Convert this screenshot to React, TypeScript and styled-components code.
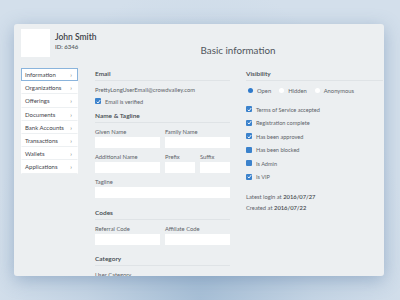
import React from "react";
import styled, { createGlobalStyle } from "styled-components";

const Global = createGlobalStyle`
  html, body { margin: 0; padding: 0; }
  body {
    width: 400px; height: 300px; overflow: hidden;
    background: #d3dfeb;
    font-family: "Source Sans Pro", Lato, "Noto Sans", sans-serif;
  }
`;

const Page = styled.div`
  width: 400px;
  height: 300px;
  padding: 24px 16px 0 14px;
  box-sizing: border-box;
  background: radial-gradient(ellipse at 50% 100%, #a7bfd6 0%, #c4d4e4 40%, #d3dfeb 75%);
`;

const Card = styled.div`
  width: 370px;
  height: 252px;
  background: #eceff1;
  border-radius: 3px;
  box-shadow: 0 4px 18px rgba(90, 125, 165, 0.45);
  overflow: hidden;
  box-sizing: border-box;
  padding: 5px 0 0 7px;
  display: grid;
  grid-template-columns: 57px 1fr;
  column-gap: 17px;
  row-gap: 11px;
  grid-template-rows: 28px auto;
`;

const Head = styled.div`
  display: flex;
  align-items: center;
  gap: 5px;
  grid-column: 1 / 2;
  white-space: nowrap;
`;

const Avatar = styled.div`
  width: 29px;
  height: 28px;
  background: #fff;
  flex: none;
`;

const NameBlock = styled.div`
  display: flex;
  flex-direction: column;
  gap: 1px;
  margin-top: -4px;
`;

const Name = styled.div`
  font-size: 8.5px;
  font-weight: 600;
  color: #3c4248;
`;

const Id = styled.div`
  font-size: 6px;
  font-weight: 600;
  color: #555b61;
`;

const Title = styled.div`
  font-size: 9.8px;
  color: #50565c;
  text-align: center;
  align-self: end;
  padding-bottom: 1px;
  padding-right: 3px;
`;

const Nav = styled.div`
  display: flex;
  flex-direction: column;
  background: #fff;
  align-self: start;
`;

const NavItem = styled.div<{ $active?: boolean }>`
  height: 13.2px;
  box-sizing: border-box;
  display: flex;
  align-items: center;
  justify-content: space-between;
  padding: 0 5px 0 3px;
  font-size: 6px;
  color: #3f454b;
  border: 1px solid ${(p) => (p.$active ? "#8ab4dc" : "transparent")};
  border-bottom: 1px solid ${(p) => (p.$active ? "#8ab4dc" : "#edf0f2")};
  span.ch { font-size: 6px; color: #6a7076; }
`;

const Body = styled.div`
  display: grid;
  grid-template-columns: 135px 137px;
  column-gap: 16px;
  padding-top: 2px;
`;

const Col = styled.div`
  display: flex;
  flex-direction: column;
`;

const SectionTitle = styled.div<{ $mt?: number }>`
  font-size: 6.5px;
  font-weight: 600;
  color: #41474d;
  padding-bottom: 3px;
  border-bottom: 1px solid #dfe3e6;
  margin-top: ${(p) => p.$mt ?? 0}px;
  margin-bottom: 5px;
`;

const Text = styled.div`
  font-size: 5.8px;
  color: #5d6369;
  line-height: 8px;
`;

const Row = styled.div<{ $cols: string; $mb?: number }>`
  display: grid;
  grid-template-columns: ${(p) => p.$cols};
  column-gap: 5px;
  margin-bottom: ${(p) => p.$mb ?? 4}px;
`;

const Field = styled.div`
  display: flex;
  flex-direction: column;
  gap: 2px;
`;

const Label = styled.div`
  font-size: 5.8px;
  color: #5d6369;
  line-height: 7px;
`;

const Input = styled.div`
  height: 11px;
  background: #fff;
`;

const CheckRow = styled.div<{ $mt?: number }>`
  display: flex;
  align-items: center;
  gap: 4px;
  font-size: 5.6px;
  color: #5d6369;
  height: 8px;
  margin-top: ${(p) => p.$mt ?? 0}px;
`;

const Box = styled.div`
  width: 6px;
  height: 6px;
  background: #3b82cc;
  border-radius: 1px;
  display: flex;
  align-items: center;
  justify-content: center;
  flex: none;
`;

const Radios = styled.div`
  display: flex;
  align-items: center;
  gap: 8px;
  margin-top: 1px;
  margin-left: 2px;
`;

const Radio = styled.div`
  display: flex;
  align-items: center;
  gap: 4px;
  font-size: 5.8px;
  color: #5d6369;
`;

const Dot = styled.div<{ $on?: boolean }>`
  width: 5px;
  height: 5px;
  border-radius: 50%;
  background: ${(p) => (p.$on ? "#2f7acb" : "#fff")};
`;

const Meta = styled.div<{ $mt?: number }>`
  font-size: 5.8px;
  color: #5d6369;
  margin-top: ${(p) => p.$mt ?? 0}px;
  line-height: 8px;
  b { font-weight: 600; color: #3f454b; }
`;

const Check = ({ on }: { on: boolean }) => (
  <Box>
    {on && (
      <svg width="5" height="5" viewBox="0 0 10 10">
        <path d="M1.5 5.5 L4 8 L8.5 2" stroke="#fff" strokeWidth="1.8" fill="none" />
      </svg>
    )}
  </Box>
);

const navItems = [
  "Information",
  "Organizations",
  "Offerings",
  "Documents",
  "Bank Accounts",
  "Transactions",
  "Wallets",
  "Applications",
];

const flags: [string, boolean][] = [
  ["Terms of Service accepted", true],
  ["Registration complete", true],
  ["Has been approved", true],
  ["Has been blocked", false],
  ["Is Admin", false],
  ["Is VIP", true],
];

export default function App() {
  return (
    <>
      <Global />
      <Page>
        <Card>
          <Head>
            <Avatar />
            <NameBlock>
              <Name>John Smith</Name>
              <Id>ID: 6346</Id>
            </NameBlock>
          </Head>
          <Title>Basic information</Title>
          <Nav>
            {navItems.map((n, i) => (
              <NavItem key={n} $active={i === 0}>
                <span>{n}</span>
                <span className="ch">›</span>
              </NavItem>
            ))}
          </Nav>
          <Body>
            <Col>
              <SectionTitle>Email</SectionTitle>
              <Text>PrettyLongUserEmail@crowdvalley.com</Text>
              <CheckRow $mt={3}>
                <Check on />
                Email is verified
              </CheckRow>
              <SectionTitle $mt={7}>Name &amp; Tagline</SectionTitle>
              <Row $cols="1fr 1fr" $mb={5}>
                <Field>
                  <Label>Given Name</Label>
                  <Input />
                </Field>
                <Field>
                  <Label>Family Name</Label>
                  <Input />
                </Field>
              </Row>
              <Row $cols="65px 30px 30px" $mb={5}>
                <Field>
                  <Label>Additional Name</Label>
                  <Input />
                </Field>
                <Field>
                  <Label>Prefix</Label>
                  <Input />
                </Field>
                <Field>
                  <Label>Suffix</Label>
                  <Input />
                </Field>
              </Row>
              <Row $cols="1fr" $mb={0}>
                <Field>
                  <Label>Tagline</Label>
                  <Input />
                </Field>
              </Row>
              <SectionTitle $mt={11}>Codes</SectionTitle>
              <Row $cols="1fr 1fr" $mb={0}>
                <Field>
                  <Label>Referral Code</Label>
                  <Input />
                </Field>
                <Field>
                  <Label>Affiliate Code</Label>
                  <Input />
                </Field>
              </Row>
              <SectionTitle $mt={10}>Category</SectionTitle>
              <Label>User Category</Label>
            </Col>
            <Col>
              <SectionTitle>Visibility</SectionTitle>
              <Radios>
                <Radio>
                  <Dot $on />
                  Open
                </Radio>
                <Radio>
                  <Dot />
                  Hidden
                </Radio>
                <Radio>
                  <Dot />
                  Anonymous
                </Radio>
              </Radios>
              {flags.map(([l, on], i) => (
                <CheckRow key={l} $mt={i === 0 ? 11 : 5.5}>
                  <Check on={on} />
                  {l}
                </CheckRow>
              ))}
              <Meta $mt={12}>
                Latest login at <b>2016/07/27</b>
              </Meta>
              <Meta $mt={3}>
                Created at <b>2016/07/22</b>
              </Meta>
            </Col>
          </Body>
        </Card>
      </Page>
    </>
  );
}
